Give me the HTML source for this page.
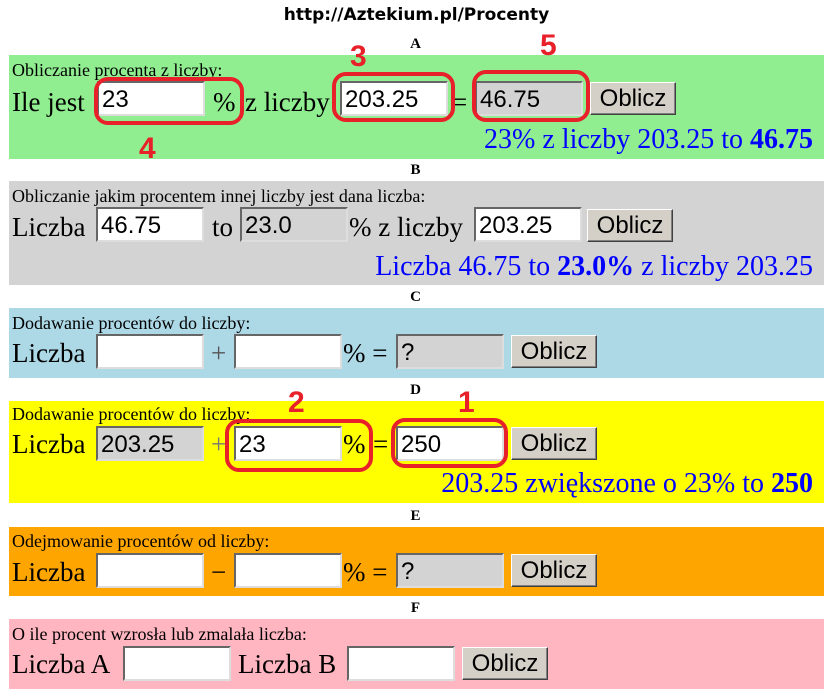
<!DOCTYPE html>
<html><head><meta charset="utf-8"><style>
*{margin:0;padding:0;box-sizing:border-box}
body{width:831px;height:698px;background:#fff;position:relative;overflow:hidden;font-family:"Liberation Serif",serif}
.a{position:absolute;white-space:nowrap}
.p{position:absolute;left:9px;width:815px}
.s{font-size:18px;line-height:20px}
.t{font-size:27px;line-height:32px}
.in{position:absolute;height:35px;width:108px;background:#fff;border:2px solid;border-color:#666 #ddd #ddd #666;font:24px/33px "Liberation Sans",sans-serif;padding-left:3px}
.g{background:#d3d3d3}
.b{position:absolute;height:33px;width:86px;background:#d4d0c8;border:1px solid;border-color:#fff #404040 #404040 #fff;box-shadow:inset -1px -1px #808080;font:24px/32px "Liberation Sans",sans-serif;text-align:center}
.L{font-weight:bold;font-size:15px;width:831px;text-align:center;left:0}
.r{color:#00f;font-size:28px;line-height:32px;right:18px}
.ov{position:absolute;border:4px solid #e8202a;border-radius:14px}
.n{position:absolute;color:#e8202a;font:bold 30px/30px "Liberation Sans",sans-serif}
</style></head><body>
<div class="a" style="left:0;width:831px;text-align:center;top:5px;font:bold 17px/20px 'DejaVu Sans','Liberation Sans',sans-serif;padding-left:2px">http://Aztekium.pl/Procenty</div>

<div class="a L" style="top:36px">A</div>
<div class="p" style="top:55px;height:104px;background:#90ee90"></div>
<div class="a s" style="left:12px;top:60px">Obliczanie procenta z liczby:</div>
<div class="a t" style="left:12px;top:86px">Ile jest</div>
<div class="in" style="left:97px;top:81px">23</div>
<div class="a t" style="left:213px;top:86px">%</div>
<div class="a t" style="left:245px;top:86px">z liczby</div>
<div class="in" style="left:340px;top:81px">203.25</div>
<div class="a t" style="left:452px;top:86px">=</div>
<div class="in g" style="left:475px;top:81px">46.75</div>
<div class="b" style="left:590px;top:82px">Oblicz</div>
<div class="a r" style="top:124px">23% z liczby 203.25 to <b>46.75</b></div>

<div class="a L" style="top:162px">B</div>
<div class="p" style="top:181px;height:104px;background:#d3d3d3"></div>
<div class="a s" style="left:12px;top:186px">Obliczanie jakim procentem innej liczby jest dana liczba:</div>
<div class="a t" style="left:12px;top:211px">Liczba</div>
<div class="in" style="left:96px;top:207px">46.75</div>
<div class="a t" style="left:212px;top:211px">to</div>
<div class="in g" style="left:240px;top:207px">23.0</div>
<div class="a t" style="left:349px;top:211px">% z liczby</div>
<div class="in" style="left:474px;top:207px">203.25</div>
<div class="b" style="left:587px;top:209px">Oblicz</div>
<div class="a r" style="top:251px">Liczba 46.75 to <b>23.0%</b> z liczby 203.25</div>

<div class="a L" style="top:289px">C</div>
<div class="p" style="top:308px;height:70px;background:#add8e6"></div>
<div class="a s" style="left:12px;top:313px">Dodawanie procentów do liczby:</div>
<div class="a t" style="left:12px;top:337px">Liczba</div>
<div class="in" style="left:96px;top:334px"></div>
<div class="a t" style="left:211px;top:337px;color:#555">+</div>
<div class="in" style="left:234px;top:334px"></div>
<div class="a t" style="left:343px;top:337px">% =</div>
<div class="in g" style="left:396px;top:334px">?</div>
<div class="b" style="left:511px;top:335px">Oblicz</div>

<div class="a L" style="top:382px">D</div>
<div class="p" style="top:401px;height:102px;background:#ff0"></div>
<div class="a s" style="left:12px;top:404px">Dodawanie procentów do liczby:</div>
<div class="a t" style="left:12px;top:428px">Liczba</div>
<div class="in g" style="left:96px;top:426px">203.25</div>
<div class="a t" style="left:211px;top:428px;color:#777">+</div>
<div class="in" style="left:234px;top:426px">23</div>
<div class="a t" style="left:343px;top:428px">%</div>
<div class="a t" style="left:373px;top:428px">=</div>
<div class="in" style="left:396px;top:426px">250</div>
<div class="b" style="left:511px;top:427px">Oblicz</div>
<div class="a r" style="top:468px">203.25 zwiększone o 23% to <b>250</b></div>

<div class="a L" style="top:508px">E</div>
<div class="p" style="top:527px;height:69px;background:#ffa500"></div>
<div class="a s" style="left:12px;top:531px">Odejmowanie procentów od liczby:</div>
<div class="a t" style="left:12px;top:556px">Liczba</div>
<div class="in" style="left:96px;top:553px"></div>
<div class="a t" style="left:211px;top:556px">−</div>
<div class="in" style="left:234px;top:553px"></div>
<div class="a t" style="left:343px;top:556px">% =</div>
<div class="in g" style="left:396px;top:553px">?</div>
<div class="b" style="left:511px;top:554px">Oblicz</div>

<div class="a L" style="top:600px">F</div>
<div class="p" style="top:619px;height:70px;background:#ffb6c1"></div>
<div class="a s" style="left:12px;top:624px">O ile procent wzrosła lub zmalała liczba:</div>
<div class="a t" style="left:12px;top:648px">Liczba A</div>
<div class="in" style="left:123px;top:646px"></div>
<div class="a t" style="left:238px;top:648px">Liczba B</div>
<div class="in" style="left:347px;top:646px"></div>
<div class="b" style="left:462px;top:647px">Oblicz</div>

<div class="ov" style="left:94px;top:77px;width:150px;height:48px"></div>
<div class="n" style="left:139px;top:134px">4</div>
<div class="ov" style="left:332px;top:72px;width:123px;height:50px"></div>
<div class="n" style="left:350px;top:42px">3</div>
<div class="ov" style="left:472px;top:70px;width:118px;height:52px"></div>
<div class="n" style="left:540px;top:31px">5</div>
<div class="ov" style="left:225px;top:419px;width:148px;height:53px"></div>
<div class="n" style="left:288px;top:388px">2</div>
<div class="ov" style="left:391px;top:418px;width:117px;height:50px"></div>
<div class="n" style="left:458px;top:388px">1</div>
</body></html>
